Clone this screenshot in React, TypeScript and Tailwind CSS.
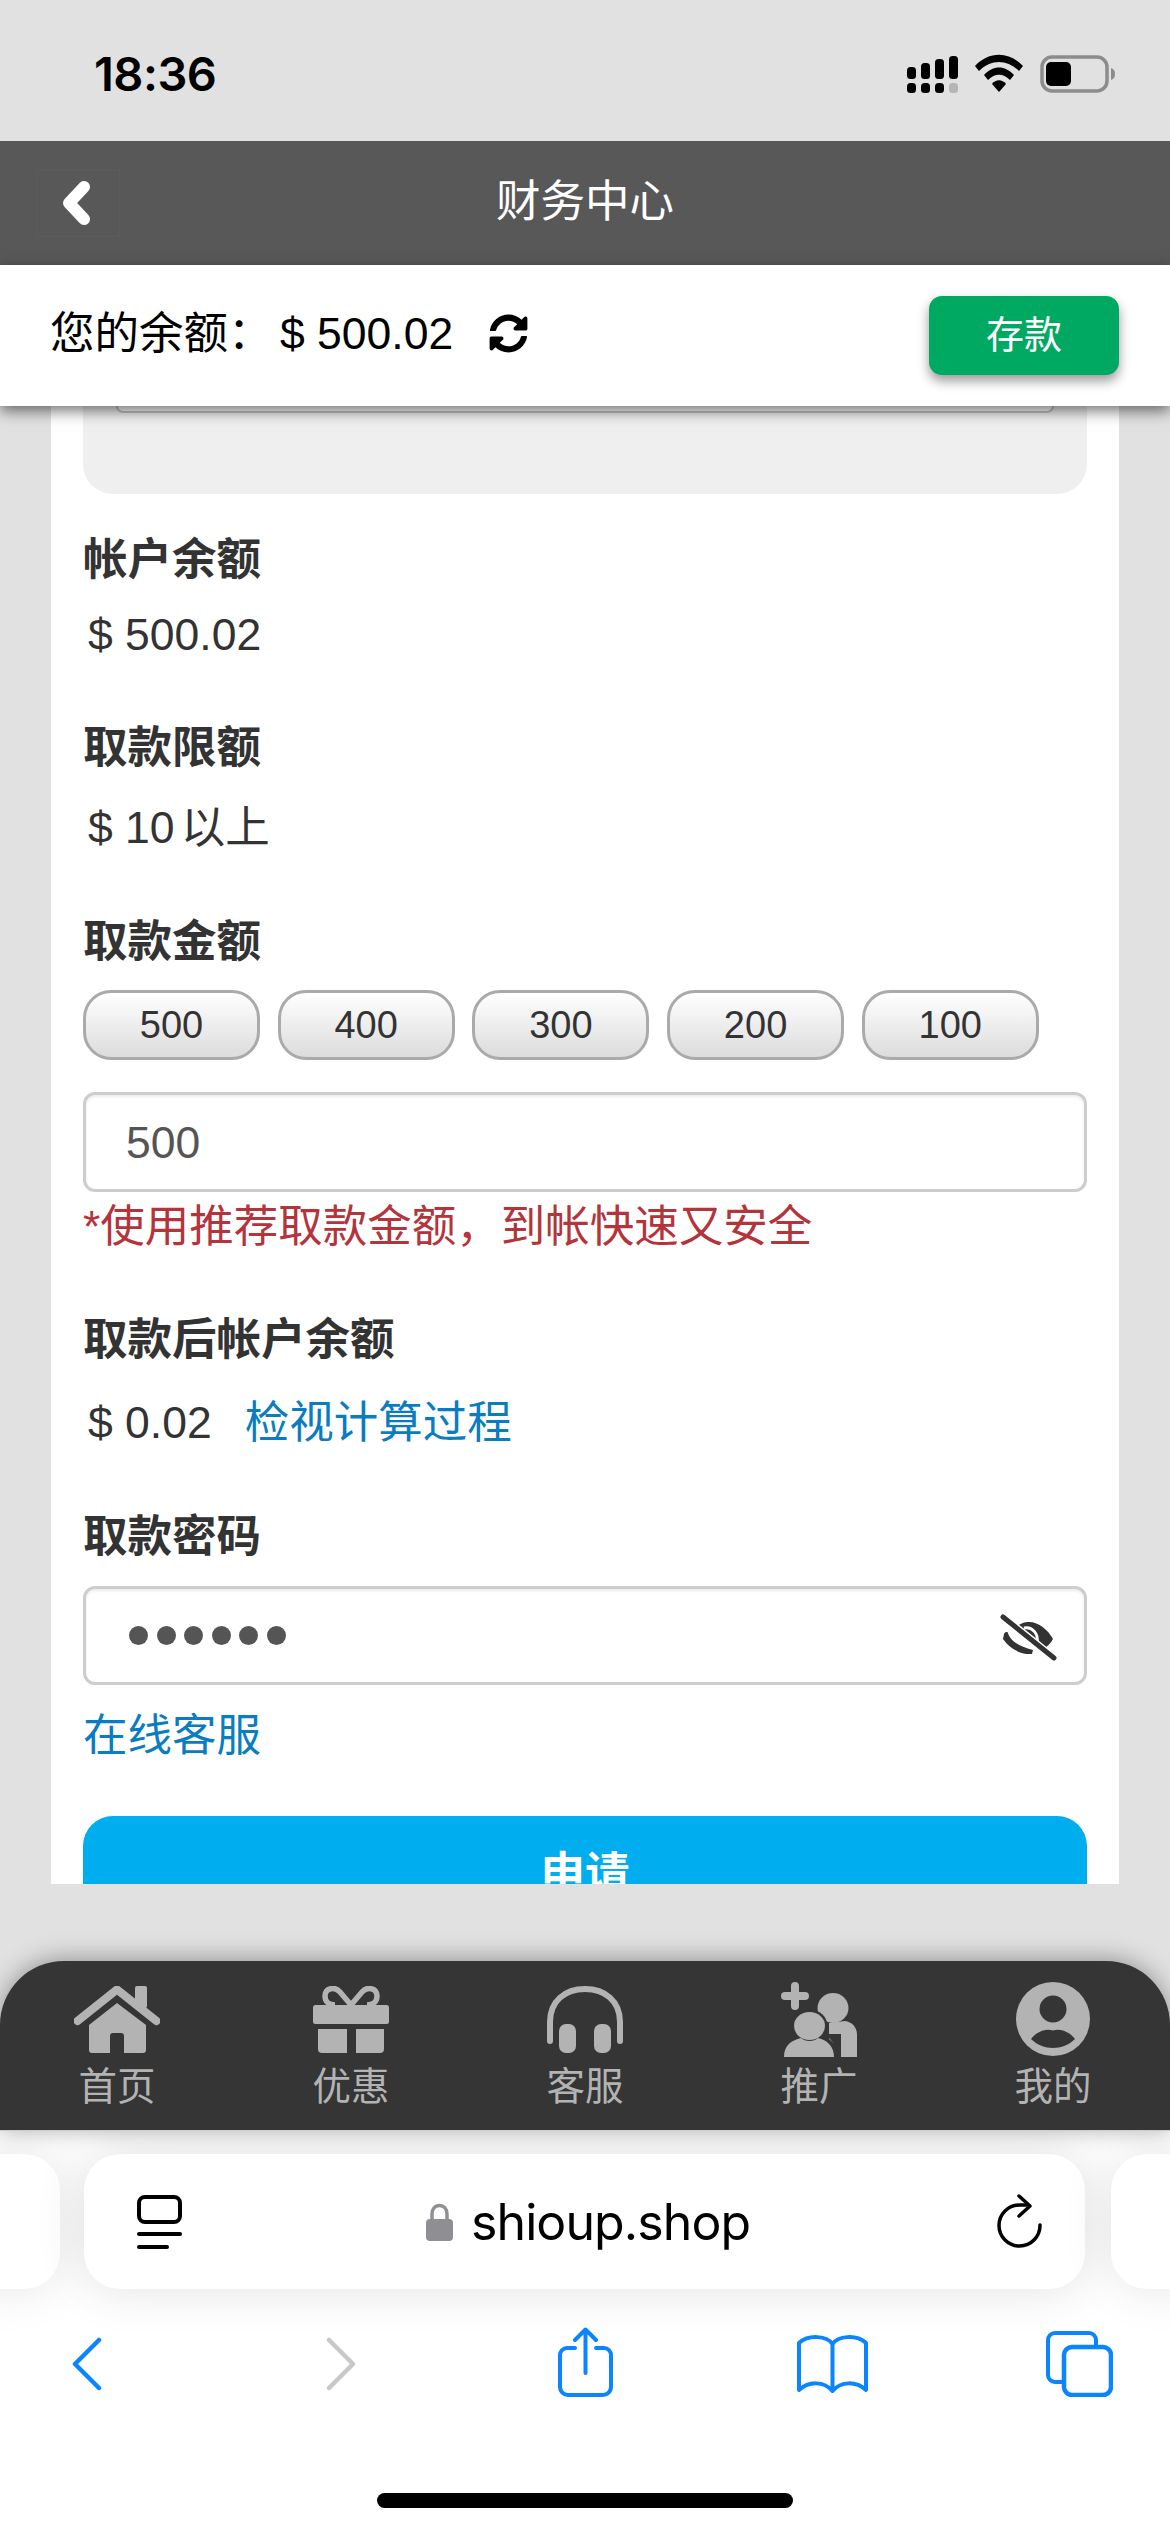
import React from "react";
import { FaSyncAlt } from "react-icons/fa";

const Label = ({ className, children }: { className: string; children: React.ReactNode }) => (
  <div className={`h-[60px] text-[44.5px] leading-[63px] font-bold text-[#333] ${className}`}>{children}</div>
);
const Value = ({ className, children }: { className: string; children: React.ReactNode }) => (
  <div className={`h-[60px] pl-[5px] text-[44.5px] leading-[63px] text-[#333] ${className}`}>{children}</div>
);

const SignalWifiBattery = () => (
  <svg width="212" height="40" viewBox="905 54 212 40">
    <g fill="#000">
      <rect x="907" y="67" width="9" height="12" rx="3.5" />
      <rect x="921" y="63" width="9" height="16" rx="3.5" />
      <rect x="935" y="59" width="9" height="20" rx="3.5" />
      <rect x="949" y="56" width="9" height="23" rx="3.5" />
      <rect x="907" y="83" width="9" height="10" rx="3.5" />
      <rect x="921" y="83" width="9" height="10" rx="3.5" />
      <rect x="935" y="83" width="9" height="10" rx="3.5" />
    </g>
    <rect x="949" y="83" width="9" height="10" rx="3.5" fill="#b5b5b5" />
    <path d="M975 66 C989 51 1009 51 1023 66 L1019 71 C1007 59 991 59 979 71 Z" fill="#000" />
    <path d="M984 75 C993 65 1005 65 1014 75 L1010 80 C1003 73 995 73 988 80 Z" fill="#000" />
    <path d="M992 84 C996 79 1002 79 1006 84 L999 92 Z" fill="#000" />
    <rect x="1042" y="57" width="65" height="34" rx="10" fill="none" stroke="#8c8c8c" strokeWidth="3.5" />
    <rect x="1046" y="62" width="25" height="24" rx="5" fill="#000" />
    <path d="M1111 68 C1114 69 1115 71 1115 74 C1115 77 1114 79 1111 80 Z" fill="#8c8c8c" />
  </svg>
);

const Home = () => (
  <svg width="86" height="67" viewBox="0 0 86 67" fill="#b3b3b3">
    <rect x="61" y="0" width="12" height="22" rx="2" />
    <path d="M3.5 35 L43 3.5 L82.5 35" fill="none" stroke="#b3b3b3" strokeWidth="8" strokeLinecap="round" strokeLinejoin="round" />
    <path d="M15 39 L43 17 L72 39 V64 a3 3 0 0 1 -3 3 H50 V50 a3 3 0 0 0 -3 -3 H39 a3 3 0 0 0 -3 3 V67 H18 a3 3 0 0 1 -3 -3 Z" />
  </svg>
);
const Gift = () => (
  <svg width="76" height="67" viewBox="0 0 76 67" fill="#b3b3b3">
    <path d="M38 19 L27 6 C22 0 12 2 12 10 C12 15 15 19 22 19 M38 19 L49 6 C54 0 64 2 64 10 C64 15 61 19 54 19" fill="none" stroke="#b3b3b3" strokeWidth="5.5" />
    <rect x="0" y="19" width="76" height="19" rx="2.5" />
    <path d="M5 43 H34 V67 H9 a4 4 0 0 1 -4 -4 Z" />
    <path d="M43 43 H71 V63 a4 4 0 0 1 -4 4 H43 Z" />
  </svg>
);
const Headset = () => (
  <svg width="76" height="67" viewBox="0 0 76 67" fill="#b3b3b3">
    <path d="M3 55 V36 C3 15 18 3 38 3 C58 3 73 15 73 36 V55" fill="none" stroke="#b3b3b3" strokeWidth="6" strokeLinecap="round" />
    <rect x="12" y="38" width="17" height="29" rx="7" />
    <rect x="47" y="38" width="17" height="29" rx="7" />
  </svg>
);
const Promote = () => (
  <svg width="76" height="75" viewBox="0 0 76 75" fill="#b3b3b3">
    <path d="M4 14 H24 M14 4 V24" fill="none" stroke="#b3b3b3" strokeWidth="8" strokeLinecap="round" />
    <ellipse cx="52" cy="26" rx="15.5" ry="15" />
    <path d="M58 75 C57 68 54 61 48 57 L48 41 L64 39 C71 40 76 45 76 53 V75 Z" />
    <ellipse cx="28.5" cy="44" rx="18" ry="16.5" fill="#353535" />
    <path d="M42 52 C53 58 56 66 56 75 H60 V52 Z" fill="#353535" />
    <ellipse cx="28.5" cy="44" rx="15.5" ry="14" />
    <path d="M3 75 C3 63 11 58 20 56 C24 60 33 60 37 56 C46 58 53 64 53 75 Z" />
  </svg>
);
const Me = () => (
  <svg width="74" height="74" viewBox="0 0 74 74">
    <ellipse cx="37" cy="37" rx="37" ry="37" fill="#b3b3b3" />
    <ellipse cx="37" cy="27" rx="13.5" ry="13.5" fill="#353535" />
    <path d="M15 57 C20 50 30 46 37 48.5 C44 46 54 50 59 57 C53 63 45 66 37 66 C29 66 21 63 15 57 Z" fill="#353535" />
  </svg>
);

const navItems = [
  { label: "首页", icon: <Home /> },
  { label: "优惠", icon: <Gift /> },
  { label: "客服", icon: <Headset /> },
  { label: "推广", icon: <Promote /> },
  { label: "我的", icon: <Me /> },
];

export default function App() {
  return (
    <div className="w-[1170px] h-[2532px] overflow-hidden bg-[#e1e1e1] flex flex-col font-['Liberation_Sans','Noto_Sans_CJK_SC',sans-serif]">
      {/* status bar */}
      <div className="h-[141px] shrink-0 flex justify-between pl-[94px] pr-[53px] pt-[54px]">
        <div className="font-['Inter',sans-serif] font-semibold text-[47px] leading-[40px] tracking-[-0.5px] text-black">18:36</div>
        <SignalWifiBattery />
      </div>

      {/* header */}
      <div className="h-[124px] shrink-0 bg-[#585858] grid grid-cols-[1fr_auto_1fr] items-center">
        <div className="pl-[36px]">
          <div className="w-[84px] h-[67px] border border-[#5c5c5c] flex items-center pl-[26px]">
            <svg width="28" height="44" viewBox="0 0 28 44">
              <path d="M21 6 L6 22 L21 38" fill="none" stroke="#fff" strokeWidth="12" strokeLinecap="round" strokeLinejoin="round" />
            </svg>
          </div>
        </div>
        <div className="text-[44.5px] leading-[60px] text-white -mt-[2px]">财务中心</div>
        <div />
      </div>

      {/* balance bar */}
      <div className="relative z-10 h-[141px] shrink-0 bg-white flex items-center justify-between pl-[50px] pr-[51px] shadow-[0_5px_14px_rgba(0,0,0,0.55)]">
        <div className="flex items-center -mt-[4px] text-[44.5px] leading-[60px] text-black">
          <span className="w-[230px]">您的余额：</span>
          <span>$ 500.02</span>
          <FaSyncAlt className="ml-[36px] w-[39px] h-[39px] text-black" />
        </div>
        <div className="w-[190px] h-[79px] rounded-[13px] bg-[#00a962] flex items-center justify-center text-[38px] text-white shadow-[0_6px_12px_rgba(0,0,0,0.4)]">
          存款
        </div>
      </div>

      {/* scrolling content */}
      <div className="h-[1478px] shrink-0 overflow-hidden">
        <div className="mx-[51px] bg-white px-[32px]">
          <div className="h-[88px] bg-[#efefef] rounded-b-[30px] px-[33px]">
            <div className="h-[7px] bg-white border-x-2 border-b-2 border-[#c4c4c4] rounded-b-[10px]" />
          </div>

          <Label className="mt-[34px]">帐户余额</Label>
          <Value className="mt-[15px]">$ 500.02</Value>
          <Label className="mt-[53px]">取款限额</Label>
          <Value className="mt-[20px]">
            $ 10<span className="ml-[6px]">以上</span>
          </Value>
          <Label className="mt-[54px]">取款金额</Label>

          <div className="mt-[20px] flex gap-[17.7px]">
            {["500", "400", "300", "200", "100"].map((v) => (
              <div
                key={v}
                className="w-[177px] h-[70px] rounded-[28px] border-[3px] border-[#aaa] bg-gradient-to-b from-white to-[#dcdcdc] flex items-center justify-center text-[38px] text-[#333]"
              >
                {v}
              </div>
            ))}
          </div>

          <div className="mt-[32px] h-[100px] rounded-[12px] border-[3px] border-[#cdcdcd] bg-white shadow-[inset_0_2px_3px_rgba(0,0,0,0.08)] flex items-center pl-[40px] pt-[2px] text-[44.5px] text-[#555]">
            500
          </div>
          <div className="mt-[8px] h-[50px] text-[44.5px] leading-[53px] text-[#b5333b]">*使用推荐取款金额，到帐快速又安全</div>

          <Label className="mt-[58px]">取款后帐户余额</Label>
          <Value className="mt-[23px] flex">
            <span>$ 0.02</span>
            <span className="ml-[33px] text-[#0a7cc0]">检视计算过程</span>
          </Value>
          <Label className="mt-[54px]">取款密码</Label>

          <div className="mt-[21px] h-[99px] rounded-[12px] border-[3px] border-[#cdcdcd] bg-white shadow-[inset_0_2px_3px_rgba(0,0,0,0.08)] flex items-center justify-between pl-[43px] pr-[25px]">
            <div className="flex gap-[8.5px]">
              {[0, 1, 2, 3, 4, 5].map((i) => (
                <div key={i} className="w-[19px] h-[19px] rounded-full bg-[#555]" />
              ))}
            </div>
            <svg width="60" height="48" viewBox="0 0 60 48" className="mt-[4px]">
              <path d="M17 13 C22 9 26 8 30 8 C40 8 49 16 54 25 C52 29 48 33 44 35 Z" fill="#333" />
              <path d="M25 14 C33 12 40 20 38 29" fill="none" stroke="#fff" strokeWidth="3" />
              <path d="M5 20 C6 18 7 18 8.5 18 C11 26 18 32 34 36 L33 40 C22 41 11 35 4 25 Z" fill="#333" />
              <path d="M4 3 L55 44" fill="none" stroke="#fff" strokeWidth="8" />
              <path d="M4 3 L55 44" fill="none" stroke="#333" strokeWidth="5" strokeLinecap="round" />
            </svg>
          </div>

          <div className="mt-[19px] h-[60px] text-[44.5px] leading-[63px] text-[#0a7cc0]">在线客服</div>

          <div className="mt-[52px] h-[116px] rounded-[30px] bg-[#00aeef] flex items-center justify-center text-[44.5px] font-bold text-white">
            申请
          </div>
        </div>
      </div>

      <div className="h-[77px] shrink-0" />

      {/* bottom nav */}
      <div className="relative z-10 h-[170px] shrink-0 rounded-t-[64px] bg-[#353535] border-b border-[#cccccc] grid grid-cols-5 pt-[20px] shadow-[0_-2px_24px_rgba(0,0,0,0.35)]">
        {navItems.map((n) => (
          <div key={n.label} className="flex flex-col items-center">
            <div className="h-[76px] flex items-center justify-center">{n.icon}</div>
            <div className="mt-[10px] text-[38.5px] leading-[40px] text-[#b3b3b3]">{n.label}</div>
          </div>
        ))}
      </div>

      {/* browser chrome */}
      <div className="flex-1 bg-white overflow-hidden">
        <div className="mt-[23px] flex">
          <div className="w-[100px] -ml-[40px] h-[135px] shrink-0 rounded-[36px] bg-white shadow-[0_0_50px_rgba(0,0,0,0.1)]" />
          <div className="ml-[24px] w-[1001px] h-[135px] shrink-0 rounded-[36px] bg-white shadow-[0_0_50px_rgba(0,0,0,0.12)] flex items-center pl-[53px] pr-[42px]">
            <svg width="45" height="54" viewBox="0 0 45 54" className="shrink-0">
              <rect x="2" y="2" width="41" height="25" rx="6" fill="none" stroke="#000" strokeWidth="4" />
              <path d="M2 39 H43 M2 52 H30" stroke="#000" strokeWidth="4" strokeLinecap="round" />
            </svg>
            <div className="ml-[244px] flex items-center">
              <svg width="27" height="38" viewBox="0 0 27 38" className="shrink-0">
                <path d="M6 18 V11 C6 6 9 2.5 13.5 2.5 C18 2.5 21 6 21 11 V18" fill="none" stroke="#8e8e93" strokeWidth="3.5" />
                <rect x="0" y="16" width="27" height="22" rx="4" fill="#8e8e93" />
              </svg>
              <span className="ml-[18px] font-['Inter',sans-serif] text-[50px] leading-[60px] tracking-[-0.9px] text-black">shioup.shop</span>
            </div>
            <svg width="46" height="56" viewBox="0 0 46 56" className="ml-auto">
              <path d="M43 31 A20.5 20.5 0 1 1 23 11 H30" fill="none" stroke="#000" strokeWidth="3.5" strokeLinecap="round" />
              <path d="M22 2 L33 12 L22 22" fill="none" stroke="#000" strokeWidth="3.5" strokeLinecap="round" strokeLinejoin="round" />
            </svg>
          </div>
          <div className="ml-[26px] w-[100px] h-[135px] shrink-0 rounded-[36px] bg-white shadow-[0_0_50px_rgba(0,0,0,0.1)]" />
        </div>

        <div className="relative mt-[38px] flex items-start pl-[71px]">
          <svg width="31" height="54" viewBox="0 0 31 54" className="mt-[10px] shrink-0">
            <path d="M28 3 L4 27 L28 51" fill="none" stroke="#0a84ff" strokeWidth="4.5" strokeLinecap="round" strokeLinejoin="round" />
          </svg>
          <svg width="31" height="54" viewBox="0 0 31 54" className="ml-[224px] mt-[10px] shrink-0">
            <path d="M3 3 L27 27 L3 51" fill="none" stroke="#c8c8c8" strokeWidth="4.5" strokeLinecap="round" strokeLinejoin="round" />
          </svg>
          <svg width="55" height="70" viewBox="0 0 55 70" className="ml-[201px] shrink-0">
            <path d="M17 21 H9 a7 7 0 0 0 -7 7 V60 a8 8 0 0 0 8 8 H45 a8 8 0 0 0 8 -8 V28 a7 7 0 0 0 -7 -7 H38" fill="none" stroke="#0a84ff" strokeWidth="4" strokeLinecap="round" />
            <path d="M27.5 46 V3 M17 13 L27.5 2.5 L38 13" fill="none" stroke="#0a84ff" strokeWidth="4" strokeLinecap="round" strokeLinejoin="round" />
          </svg>
          <svg width="71" height="59" viewBox="0 0 71 59" className="ml-[184px] mt-[7px] shrink-0">
            <path d="M35.5 10 C30 2 12 0 2 9 V56 C12 47 27 47 35.5 57 C44 47 59 47 69 56 V9 C59 0 41 2 35.5 10 Z M35.5 10 V57" fill="none" stroke="#0a84ff" strokeWidth="4" strokeLinecap="round" strokeLinejoin="round" />
          </svg>
          <svg width="67" height="66" viewBox="0 0 67 66" className="ml-[178px] mt-[4px] shrink-0">
            <path d="M18 51 H9 a7 7 0 0 1 -7 -7 V9 a7 7 0 0 1 7 -7 H43 a7 7 0 0 1 7 7 V16" fill="none" stroke="#0a84ff" strokeWidth="4" />
            <rect x="18" y="16" width="47" height="48" rx="8" fill="none" stroke="#0a84ff" strokeWidth="4.5" />
          </svg>
        </div>

        <div className="mt-[96px] ml-[377px] w-[416px] h-[15px] rounded-full bg-black" />
      </div>
    </div>
  );
}
